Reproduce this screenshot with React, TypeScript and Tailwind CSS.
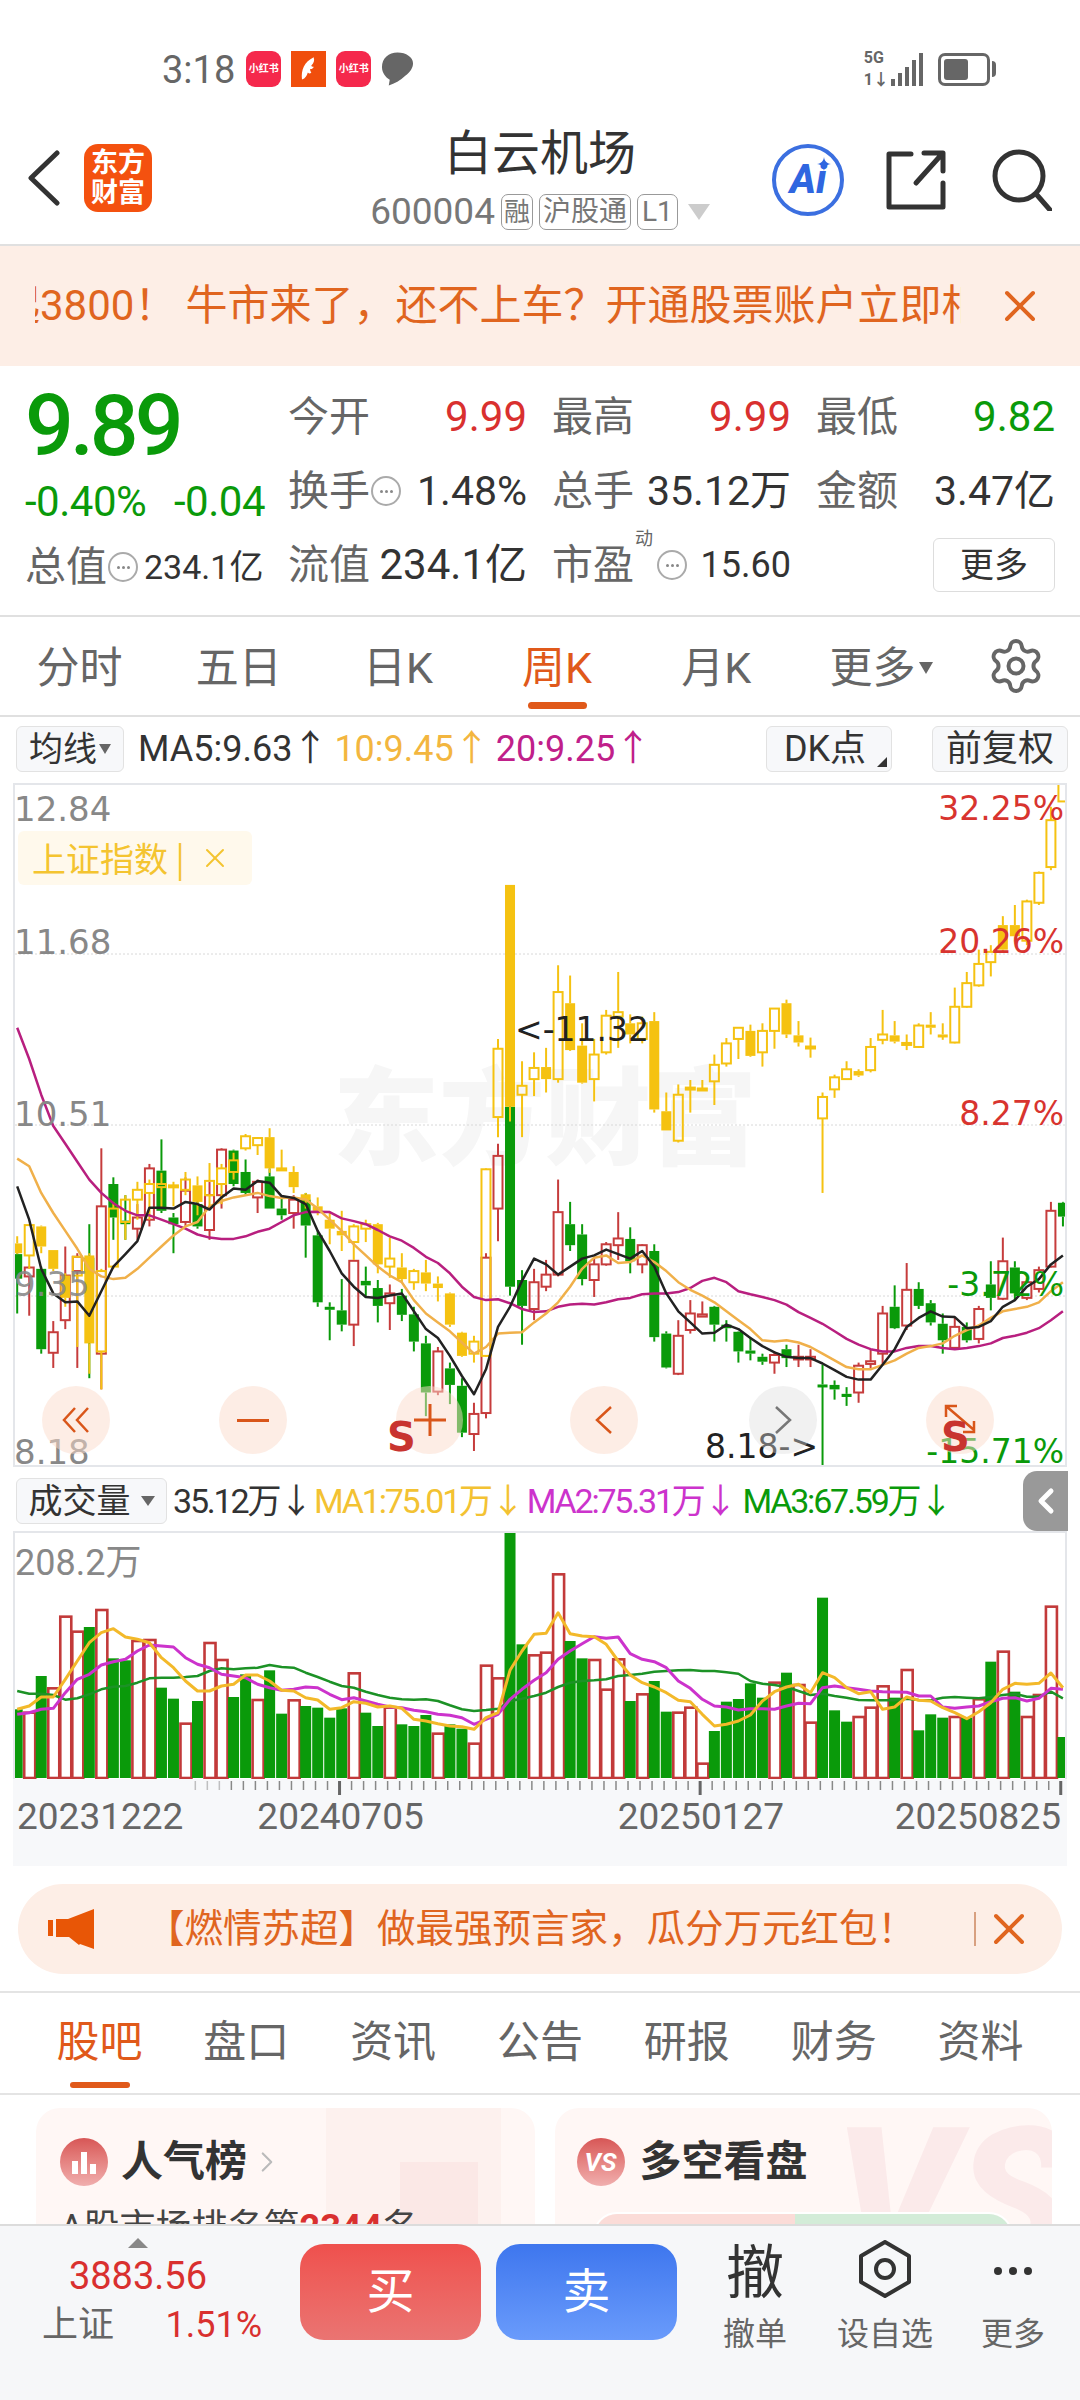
import React from "react";
import { X, ChevronLeft, Settings, ChevronRight } from "lucide-react";

// chart data was read off the screenshot, so y values are in "trace" units
type Candle = [number, number, number, number, string];

const main: Candle[] = [
  [1060,1062,1117,1195,"g"],[1090,1092,1112,1200,"r"],[1090,1095,1275,1285,"g"],[1212,1237,1283,1317,"r"],
  [1045,1110,1210,1230,"r"],[1060,1068,1100,1317,"r"],[995,1070,1100,1340,"g"],[825,955,1285,1365,"r"],
  [890,905,980,1030,"g"],[930,987,995,1030,"g"],[950,980,1005,1030,"r"],[860,870,985,1000,"r"],
  [805,875,965,970,"g"],[970,980,995,1060,"g"],[890,920,990,1000,"r"],[940,950,1000,1005,"g"],
  [900,930,1008,1030,"r"],[825,828,930,960,"r"],[828,830,905,910,"g"],[850,878,925,930,"g"],
  [895,900,935,970,"r"],[870,888,960,960,"g"],[935,960,975,985,"g"],[930,940,970,1005,"r"],
  [925,940,998,1070,"g"],[1010,1020,1170,1180,"g"],[1170,1180,1186,1255,"g"],[1118,1188,1220,1235,"g"],
  [1075,1077,1220,1268,"r"],[1090,1122,1132,1160,"g"],[1120,1138,1178,1215,"g"],[1130,1150,1172,1232,"r"],
  [1140,1155,1198,1212,"g"],[1180,1197,1258,1280,"g"],[1245,1262,1372,1425,"g"],[1270,1280,1370,1378,"r"],
  [1305,1318,1355,1398,"g"],[1340,1357,1462,1472,"g"],[1395,1420,1465,1503,"r"],[1060,1070,1418,1430,"r"],
  [815,842,960,1033,"r"],[730,732,1135,1155,"g"],[1098,1120,1178,1265,"g"],[1095,1125,1185,1210,"r"],
  [1075,1108,1135,1145,"r"],[895,968,1108,1112,"r"],[945,995,1042,1055,"g"],[995,1018,1118,1132,"g"],
  [1070,1085,1120,1158,"r"],[1035,1040,1085,1088,"r"],[968,1027,1042,1075,"r"],[1002,1028,1078,1105,"g"],
  [1040,1042,1085,1105,"r"],[1040,1055,1248,1258,"g"],[1235,1240,1316,1318,"g"],[1210,1245,1330,1333,"r"],
  [1165,1195,1232,1240,"r"],[1168,1197,1202,1202,"r"],[1178,1180,1220,1258,"g"],[1210,1220,1228,1258,"g"],
  [1235,1236,1280,1305,"g"],[1248,1278,1285,1300,"g"],[1285,1292,1303,1310,"g"],[1280,1288,1305,1330,"r"],
  [1265,1275,1295,1315,"g"],[1265,1292,1298,1315,"r"],[1275,1292,1298,1315,"r"],[1310,1354,1358,1540,"g"],
  [1345,1355,1365,1388,"g"],[1360,1375,1382,1402,"g"],[1305,1312,1372,1395,"r"],[1275,1302,1308,1320,"r"],
  [1178,1195,1285,1310,"r"],[1132,1180,1228,1230,"g"],[1082,1142,1222,1232,"r"],[1125,1140,1178,1185,"g"],
  [1165,1172,1215,1222,"g"],[1195,1218,1255,1285,"g"],[1205,1225,1272,1272,"r"],[1215,1225,1255,1260,"g"],
  [1178,1185,1252,1262,"r"],[1078,1130,1160,1188,"g"],[1025,1078,1162,1165,"r"],[1078,1092,1150,1165,"g"],
  [1115,1125,1160,1165,"r"],[1090,1098,1140,1148,"r"],[945,965,1090,1092,"r"],[945,947,978,1000,"g"],
];

const index: Candle[] = [
  [1022,1038,1060,1062,"Y"],[995,997,1065,1095,"y"],[998,1000,1045,1060,"Y"],[1053,1053,1095,1100,"Y"],
  [1105,1110,1160,1180,"Y"],[1068,1068,1110,1270,"y"],[1060,1065,1262,1330,"Y"],[1095,1100,1280,1365,"y"],
  [945,960,1090,1095,"y"],[930,940,990,1030,"y"],[900,918,940,985,"y"],[895,905,925,985,"y"],
  [880,905,912,960,"y"],[900,908,912,955,"y"],[878,895,918,930,"y"],[888,908,945,975,"Y"],
  [858,898,930,960,"y"],[860,870,905,950,"y"],[835,852,878,895,"y"],[793,798,825,830,"y"],
  [800,802,818,840,"y"],[780,800,870,880,"Y"],[828,870,874,874,"y"],[865,878,912,925,"Y"],
  [925,928,942,960,"Y"],[935,955,965,975,"Y"],[970,985,1005,1040,"Y"],[965,1010,1020,1055,"Y"],
  [995,1000,1035,1075,"y"],[985,995,1005,1035,"y"],[992,995,1085,1105,"Y"],[1025,1072,1090,1115,"y"],
  [1060,1092,1118,1125,"Y"],[1095,1100,1125,1142,"y"],[1075,1103,1128,1145,"Y"],[1112,1128,1138,1168,"Y"],
  [1148,1150,1220,1225,"Y"],[1236,1238,1290,1292,"Y"],[1245,1258,1285,1305,"y"],[870,872,1290,1292,"y"],
  [580,602,755,800,"y"],[235,235,732,765,"Y"],[630,685,705,800,"y"],[610,645,670,708,"y"],
  [600,643,670,700,"Y"],[415,475,670,678,"y"],[438,500,605,607,"Y"],[545,595,678,680,"Y"],
  [580,615,670,720,"y"],[515,528,610,615,"y"],[430,520,530,600,"y"],[525,545,570,590,"Y"],
  [530,545,580,590,"y"],[520,540,738,745,"Y"],[700,742,785,785,"Y"],[682,705,808,812,"y"],
  [672,689,691,745,"y"],[672,691,694,695,"y"],[615,638,675,728,"y"],[578,590,635,642,"y"],
  [555,555,580,625,"y"],[548,562,618,620,"Y"],[545,562,610,642,"y"],[512,512,562,602,"y"],
  [492,500,570,578,"Y"],[540,572,588,597,"Y"],[577,597,599,622,"y"],[700,710,758,925,"y"],
  [660,666,693,712,"y"],[630,648,670,672,"y"],[648,652,662,665,"Y"],[578,598,650,655,"y"],
  [515,570,582,592,"y"],[540,572,586,590,"Y"],[570,589,591,605,"y"],[545,550,598,600,"y"],
  [520,548,555,570,"Y"],[545,570,574,582,"Y"],[465,508,588,590,"y"],[430,455,508,510,"y"],
  [380,412,460,463,"y"],[370,385,408,440,"y"],[305,325,380,385,"Y"],[280,325,350,362,"Y"],
  [268,272,360,370,"y"],[205,208,275,280,"y"],[60,90,195,202,"y"],[5,8,48,48,"y"],
];

const ma5 = [910,985,1095,1150,1170,1168,1200,1145,1090,1062,1033,958,958,960,945,950,962,935,915,918,898,902,932,936,950,1010,1055,1105,1135,1158,1160,1155,1150,1190,1230,1250,1290,1335,1376,1320,1225,1180,1122,1072,1085,1108,1090,1072,1065,1052,1062,1072,1055,1090,1150,1190,1215,1240,1238,1220,1230,1250,1268,1282,1292,1295,1295,1307,1322,1337,1343,1343,1310,1275,1225,1205,1190,1202,1203,1228,1225,1212,1180,1165,1135,1118,1085,1065];
const ma10 = [848,865,925,970,1010,1050,1095,1112,1118,1115,1095,1070,1045,1020,1000,990,955,943,935,930,925,932,936,935,940,960,985,1010,1040,1065,1090,1110,1125,1165,1195,1215,1235,1260,1285,1270,1240,1238,1237,1215,1195,1170,1135,1095,1070,1065,1082,1080,1065,1080,1100,1125,1142,1155,1170,1190,1210,1230,1255,1258,1255,1260,1270,1285,1300,1315,1320,1320,1310,1300,1285,1272,1268,1262,1245,1232,1222,1205,1190,1185,1180,1170,1145,1125];
const ma20 = [555,625,705,775,815,855,895,925,948,965,975,975,985,995,1005,1018,1025,1028,1028,1022,1012,1005,990,975,968,967,968,982,988,995,1008,1022,1032,1048,1068,1082,1105,1135,1158,1165,1163,1172,1185,1192,1190,1180,1175,1173,1175,1170,1163,1160,1152,1150,1150,1147,1138,1122,1115,1125,1145,1152,1158,1165,1175,1192,1205,1218,1235,1252,1265,1275,1280,1280,1272,1268,1268,1272,1275,1272,1268,1262,1250,1245,1238,1228,1210,1190];

const vol = [715,725,615,652,437,482,468,417,562,568,510,507,650,683,758,690,516,567,678,610,687,598,728,688,705,710,740,712,607,725,765,710,760,765,732,788,760,773,818,584,622,183,520,553,545,310,510,562,567,656,565,690,670,630,722,725,710,878,780,692,684,637,680,635,605,642,755,380,718,752,738,710,646,680,597,778,730,740,738,740,685,572,542,662,738,672,407,798];
const volKind = main.map((c) => c[4]);
const ma1 = [715,705,678,678,625,570,515,485,473,498,505,515,560,590,630,660,660,645,640,612,612,630,658,660,680,687,715,710,692,697,708,705,712,745,750,758,765,767,775,740,725,598,540,490,487,425,488,495,497,520,570,612,635,648,665,688,692,730,765,760,750,732,690,662,648,640,665,605,620,650,668,662,715,708,678,688,690,710,725,743,722,695,655,637,640,637,606,650];
const ma2 = [730,725,715,712,665,625,610,582,572,565,540,522,525,528,560,580,590,610,615,620,640,650,658,655,648,650,670,686,680,690,700,708,710,718,722,730,733,740,760,745,730,685,655,628,605,565,540,518,497,502,498,548,565,572,590,630,652,685,705,708,717,713,713,715,705,697,698,650,645,650,655,660,662,663,664,675,675,708,712,708,705,692,682,680,690,682,652,655];
const ma3 = [660,668,668,672,686,682,670,655,647,645,635,622,620,620,618,615,600,592,595,592,590,582,588,590,605,618,632,645,650,662,672,680,685,686,685,690,703,715,720,717,713,690,683,675,665,648,635,630,628,625,615,612,608,602,600,598,597,600,600,604,608,630,638,642,648,660,672,668,675,680,687,688,688,688,683,687,688,680,678,680,682,678,672,668,677,677,662,682];

const cx = (i: number) => 17.2 + 12.02 * i;
const ky = (y: number) => 780 + y / 2.24;
const vy = (y: number) => 1470 + y / 3;

const COLORS: Record<string, string> = { r: "#c63c3c", g: "#0a9a0a", y: "#f5c211", Y: "#f5c211" };

function Candles({ data }: { data: Candle[] }) {
  return (
    <>
      {data.map(([hi, top, bot, lo, kind], i) => {
        const x = cx(i);
        const color = COLORS[kind];
        const solid = kind === "g" || kind === "Y";
        return (
          <g key={i} stroke={color} strokeWidth={2}>
            <line x1={x} x2={x} y1={ky(hi)} y2={ky(top)} />
            <line x1={x} x2={x} y1={ky(bot)} y2={ky(lo)} />
            {solid ? (
              <rect x={x - 5} y={ky(top)} width={10} height={Math.max(ky(bot) - ky(top), 3)} fill={color} stroke="none" />
            ) : (
              <rect x={x - 4.5} y={ky(top)} width={9} height={Math.max(ky(bot) - ky(top), 2)} fill="none" />
            )}
          </g>
        );
      })}
    </>
  );
}

function Line({ ys, map, color, w = 2.5 }: { ys: number[]; map: (y: number) => number; color: string; w?: number }) {
  return (
    <polyline
      points={ys.map((y, i) => `${cx(i).toFixed(1)},${map(y).toFixed(1)}`).join(" ")}
      fill="none"
      stroke={color}
      strokeWidth={w}
      strokeLinejoin="round"
    />
  );
}

function InfoDot() {
  return (
    <span className="mx-[1px] flex h-[30px] w-[30px] shrink-0 items-center justify-center gap-[2px] rounded-full border-2 border-[#aaa]">
      <span className="h-[3px] w-[3px] rounded-full bg-[#888]" />
      <span className="h-[3px] w-[3px] rounded-full bg-[#888]" />
      <span className="h-[3px] w-[3px] rounded-full bg-[#888]" />
    </span>
  );
}

function RedBookIcon() {
  return (
    <div className="flex h-[36px] w-[35px] items-center justify-center rounded-[9px] bg-[#f5284c] text-[10px] leading-none font-bold text-white">
      小红书
    </div>
  );
}

function StatusBar() {
  return (
    <div className="flex h-[115px] shrink-0 items-start pt-[50px]">
      <span className="ml-[162px] text-[38px] leading-[40px] text-[#666]">3:18</span>
      <div className="ml-[11px] flex h-[38px] items-center gap-[10px]">
        <RedBookIcon />
        <div className="flex h-[36px] w-[35px] items-center justify-center bg-[#f04e0c]">
          <svg viewBox="0 0 24 24" className="h-[28px] w-[28px]">
            <path d="M16 2C8 6 5 13 6 21c3-1 4-3 5-6 1 1 2 1 3 0-1-1-1-2-1-3 2 0 3-1 3-2-1 0-2 0-2-1 2-2 3-4 2-7z" fill="#fff" />
          </svg>
        </div>
        <RedBookIcon />
        <svg viewBox="0 0 34 36" className="h-[36px] w-[33px]">
          <path d="M17 1C8 1 1 7 1 16c0 6 4 11 8 13l-1 6c6-2 12-5 17-10 5-4 8-8 8-13C33 6 26 1 17 1z" fill="#666" />
        </svg>
      </div>
      <div className="ml-auto mr-[84px] flex items-center">
        <div className="flex h-[38px] flex-col justify-between text-[16px] leading-[16px] font-bold text-[#666]">
          <span>5G</span>
          <span>1↓</span>
        </div>
        <svg viewBox="0 0 34 34" className="ml-[1px] h-[34px] w-[34px]" fill="#666">
          <rect x="1" y="27" width="4" height="7" />
          <rect x="8" y="21" width="4" height="13" />
          <rect x="15" y="15" width="4" height="19" />
          <rect x="22" y="8" width="4" height="26" />
          <rect x="29" y="1" width="4" height="33" />
        </svg>
        <div className="ml-[14px] flex h-[33px] w-[52px] items-center rounded-[7px] border-[3px] border-[#666] p-[3px]">
          <div className="h-full w-[24px] rounded-[3px] bg-[#666]" />
        </div>
        <div className="ml-[2px] h-[16px] w-[4px] rounded-r bg-[#666]" />
      </div>
    </div>
  );
}

function Header() {
  return (
    <div className="flex h-[131px] shrink-0 items-start border-b-2 border-[#e0e0e0]">
      <div className="flex flex-1 items-center pl-[28px] pt-[29px]">
        <svg viewBox="0 0 32 56" className="h-[56px] w-[32px]" fill="none" stroke="#333" strokeWidth="5" strokeLinecap="round" strokeLinejoin="round">
          <path d="M29 3 3 28l26 25" />
        </svg>
        <div className="ml-[24px] flex h-[68px] w-[68px] flex-col items-center justify-center rounded-[14px] bg-[#f4510f] text-[27px] leading-[30px] font-bold text-white">
          <span>东方</span>
          <span>财富</span>
        </div>
      </div>
      <div className="flex flex-col items-center">
        <span className="mt-[12px] text-[48px] leading-[54px] text-[#333]">白云机场</span>
        <div className="mt-[11px] flex items-center">
          <span className="text-[37px] leading-[40px] text-[#777]">600004</span>
          <span className="ml-[6px] rounded-[7px] border border-[#999] px-[2px] text-[26px] leading-[34px] text-[#777]">融</span>
          <span className="ml-[6px] rounded-[7px] border border-[#999] px-[3px] text-[28px] leading-[34px] text-[#777]">沪股通</span>
          <span className="ml-[6px] rounded-[7px] border border-[#999] px-[4px] text-[28px] leading-[34px] text-[#777]">L1</span>
          <svg viewBox="0 0 22 16" className="ml-[10px] h-[16px] w-[22px]">
            <path d="M0 0h22L11 16z" fill="#ccc" />
          </svg>
        </div>
      </div>
      <div className="flex flex-1 items-center justify-end pr-[28px] pt-[29px]">
        <div className="relative flex h-[72px] w-[72px] items-center justify-center rounded-full border-[4px] border-[#3b6fe0] text-[40px] font-extrabold italic leading-none text-[#2f66e0]">
          Ai
          <svg viewBox="0 0 14 14" className="absolute right-[9px] top-[9px] h-[14px] w-[14px]">
            <path d="M7 0c.6 4 2.6 6.400 7 7-4.400.6-6.400 3-7 7-.6-4-2.600-6.400-7-7 4.400-.6 6.400-3 7-7z" fill="#2f66e0" />
          </svg>
        </div>
        <svg viewBox="0 0 60 60" className="ml-[42px] h-[60px] w-[60px]" fill="none" stroke="#333" strokeWidth="5" strokeLinecap="round" strokeLinejoin="round">
          <path d="M25 4H3v53h54V33" />
          <path d="M30 33 56 4M38 3h19v18" />
        </svg>
        <svg viewBox="0 0 60 62" className="ml-[46px] h-[62px] w-[60px]" fill="none" stroke="#333" strokeWidth="5" strokeLinecap="round">
          <circle cx="27" cy="27" r="24" />
          <path d="m45 46 13 15" />
        </svg>
      </div>
    </div>
  );
}

function Banner() {
  return (
    <div className="flex h-[120px] shrink-0 items-center bg-[#fdeee6] text-[#e0651f]">
      <div className="ml-[35px] w-[926px] overflow-hidden whitespace-nowrap text-[42px] leading-[48px]">
        <span className="ml-[-37px] inline-block">起3800！<span className="ml-[9px]">牛市来了，还不上车？开通股票账户立即相约</span></span>
      </div>
      <X className="ml-[33px] h-[52px] w-[52px]" strokeWidth={1.8} />
    </div>
  );
}

function Quote() {
  return (
    <div className="flex h-[251px] shrink-0 border-b-2 border-[#e0e0e0] pl-[25px] pr-[25px] text-[41px] leading-[48px]">
      <div className="w-[263px] shrink-0">
        <div className="mt-[15px] text-[86px] leading-[90px] font-medium tracking-[-4px] text-[#0a9a0a]">9.89</div>
        <div className="mt-[7px] flex w-[240px] justify-between text-[42px] leading-[48px] tracking-[-0.5px] text-[#0a9a0a]">
          <span>-0.40%</span>
          <span>-0.04</span>
        </div>
        <div className="mt-[17px] flex w-[240px] items-center text-[#666]">
          <span>总值</span>
          <InfoDot />
          <span className="ml-[5px] whitespace-nowrap text-[34px] text-[#333]">234.1亿</span>
        </div>
      </div>
      <div className="mt-[27px] grid flex-1 grid-cols-3 grid-rows-[48px_48px_48px] gap-x-[25px] gap-y-[26px] text-[#666]">
        <div className="flex items-center justify-between">
          <span>今开</span>
          <span className="text-[42px] text-[#d9302f]">9.99</span>
        </div>
        <div className="flex items-center justify-between">
          <span>最高</span>
          <span className="text-[42px] text-[#d9302f]">9.99</span>
        </div>
        <div className="flex items-center justify-between">
          <span>最低</span>
          <span className="text-[42px] text-[#0a9a0a]">9.82</span>
        </div>
        <div className="flex items-center justify-between">
          <span className="flex items-center">换手<InfoDot /></span>
          <span className="text-[#333]">1.48%</span>
        </div>
        <div className="flex items-center justify-between">
          <span>总手</span>
          <span className="whitespace-nowrap text-[#333]">35.12万</span>
        </div>
        <div className="flex items-center justify-between">
          <span>金额</span>
          <span className="whitespace-nowrap text-[#333]">3.47亿</span>
        </div>
        <div className="flex items-center justify-between">
          <span>流值</span>
          <span className="whitespace-nowrap text-[42px] text-[#333]">234.1亿</span>
        </div>
        <div className="flex items-center justify-between">
          <span className="relative flex shrink-0 items-center whitespace-nowrap">
            市盈
            <span className="absolute left-[83px] top-[-12px] text-[18px] leading-[20px]">动</span>
            <span className="ml-[22px]"><InfoDot /></span>
          </span>
          <span className="text-[36px] text-[#333]">15.60</span>
        </div>
        <div className="flex items-center justify-end">
          <span className="flex h-[54px] w-[122px] items-center justify-center rounded-[6px] border border-[#ddd] text-[34px] text-[#333]">更多</span>
        </div>
      </div>
    </div>
  );
}

function Periods() {
  return (
    <div className="flex h-[100px] shrink-0 border-b-2 border-[#e0e0e0] text-[43px] text-[#666]">
      <div className="grid flex-1 grid-cols-6 pt-[4px]">
        <span className="flex items-center justify-center">分时</span>
        <span className="flex items-center justify-center">五日</span>
        <span className="flex items-center justify-center">日K</span>
        <span className="relative flex items-center justify-center text-[#e0591a]">
          周K
          <span className="absolute bottom-[6px] left-[50px] h-[7px] w-[59px] rounded-full bg-[#e0591a]" />
        </span>
        <span className="flex items-center justify-center">月K</span>
        <span className="ml-[12px] flex items-center justify-center">
          更多
          <svg viewBox="0 0 14 14" className="ml-[4px] h-[14px] w-[14px]">
            <path d="M0 1h14L7 13z" fill="#666" />
          </svg>
        </span>
      </div>
      <div className="flex w-[125px] items-center justify-center pr-[4px]">
        <Settings className="h-[60px] w-[60px]" strokeWidth={1.6} />
      </div>
    </div>
  );
}

function MaRow() {
  return (
    <div className="flex h-[63px] shrink-0 items-center pl-[16px] pr-[12px] text-[36px] leading-[44px]">
      <span className="flex h-[46px] w-[108px] items-center justify-center rounded-[6px] border border-[#e2e2e2] bg-[#f7f8fa] text-[34px] text-[#333]">
        均线
        <svg viewBox="0 0 12 12" className="ml-[2px] h-[12px] w-[12px]">
          <path d="M0 1h12L6 11z" fill="#666" />
        </svg>
      </span>
      <span className="ml-[14px] text-[#333]">MA5:9.63↑</span>
      <span className="ml-[6px] text-[#f3b63f]">10:9.45↑</span>
      <span className="ml-[6px] text-[#c0208a]">20:9.25↑</span>
      <span className="relative ml-auto flex h-[46px] w-[126px] items-center justify-center rounded-[6px] border border-[#e2e2e2] bg-[#f7f8fa] pr-[8px] text-[#333]">
        DK点
        <svg viewBox="0 0 10 10" className="absolute bottom-[4px] right-[4px] h-[10px] w-[10px]">
          <path d="M10 0v10H0z" fill="#333" />
        </svg>
      </span>
      <span className="ml-[40px] flex h-[46px] w-[136px] items-center justify-center rounded-[6px] border border-[#e2e2e2] bg-[#f7f8fa] text-[#333]">前复权</span>
    </div>
  );
}

function KChart() {
  return (
    <div className="relative mx-[13px] mt-[3px] h-[684px] w-[1054px] shrink-0 overflow-hidden border-2 border-[#e4e6ea] bg-white font-['DejaVu_Sans','Noto_Sans_CJK_SC',sans-serif] text-[34px] leading-[34px]">
      {/* watermark sits under the candles */}
      <div className="absolute left-[318px] top-[268px] font-['Noto_Sans_CJK_SC',sans-serif] text-[106px] leading-[114px] font-black whitespace-nowrap text-[#f6f6f6]">
        东方财富
      </div>
      <svg viewBox="15 785 1050 680" className="absolute left-0 top-0 h-[680px] w-[1050px]">
        {[954, 1125, 1296].map((y) => (
          <line key={y} x1={15} x2={1065} y1={y} y2={y} stroke="#d8d8d8" strokeWidth={1} strokeDasharray="2 2" />
        ))}
        <Candles data={main} />
        <Candles data={index} />
        <Line ys={ma20} map={ky} color="#b81f7f" w={2.5} />
        <Line ys={ma10} map={ky} color="#f0b04a" w={2.5} />
        <Line ys={ma5} map={ky} color="#222" w={2.5} />
      </svg>

      <span className="absolute left-[-1px] top-[7px] text-[#888]">12.84</span>
      <span className="absolute left-[-1px] top-[140px] text-[#888]">11.68</span>
      <span className="absolute left-[-1px] top-[312px] text-[#888]">10.51</span>
      <span className="absolute left-[-1px] top-[482px] text-[#888]/90">9.35</span>
      <span className="absolute left-[-1px] top-[650px] text-[#888]">8.18</span>
      <span className="absolute right-[1px] top-[7px] text-[33px] text-[#d8342f]">32.25%</span>
      <span className="absolute right-[1px] top-[140px] text-[33px] text-[#d8342f]">20.26%</span>
      <span className="absolute right-[1px] top-[312px] text-[33px] text-[#d8342f]">8.27%</span>
      <span className="absolute right-[1px] top-[483px] text-[33px] text-[#0a9a0a]">-3.72%</span>
      <span className="absolute right-[1px] top-[650px] text-[33px] text-[#0a9a0a]">-15.71%</span>
      <span className="absolute left-[500px] top-[228px] text-[33px] text-[#222]">{"<-11.32"}</span>
      <span className="absolute left-[690px] top-[645px] text-[33px] text-[#222]">{"8.18->"}</span>

      <div className="absolute left-[3px] top-[46px] flex h-[54px] w-[234px] items-center rounded-[6px] bg-[#fff9ec] pl-[14px] font-['Noto_Sans_CJK_SC',sans-serif] text-[34px] text-[#f4c430]">
        上证指数 |
        <X className="ml-[14px] h-[32px] w-[32px]" strokeWidth={1.5} />
      </div>

      {/* paging buttons on top of the chart */}
      <div className="absolute inset-x-0 top-[601px] flex justify-between pl-[27px] pr-[71px]">
        <div className="flex h-[68px] w-[68px] items-center justify-center rounded-full bg-[#fbdccb]/50">
          <svg viewBox="0 0 30 30" className="h-[30px] w-[30px]" fill="none" stroke="#d9561a" strokeWidth="2.5"><path d="M14 3 3 15l11 12M27 3 16 15l11 12" /></svg>
        </div>
        <div className="ml-[109px] flex h-[68px] w-[68px] items-center justify-center rounded-full bg-[#fbdccb]/50">
          <div className="h-[3px] w-[32px] bg-[#d9561a]" />
        </div>
        <div className="ml-[109px] flex h-[68px] w-[68px] items-center justify-center rounded-full bg-[#fbdccb]/50">
          <svg viewBox="0 0 32 32" className="h-[32px] w-[32px]" stroke="#d9561a" strokeWidth="3"><path d="M0 16h32M16 0v32" /></svg>
        </div>
        <div className="ml-[107px] flex h-[68px] w-[68px] items-center justify-center rounded-full bg-[#fbdccb]/50">
          <svg viewBox="0 0 20 30" className="h-[30px] w-[20px]" fill="none" stroke="#d9561a" strokeWidth="2.5"><path d="M17 2 3 15l14 13" /></svg>
        </div>
        <div className="ml-[111px] flex h-[68px] w-[68px] items-center justify-center rounded-full bg-[#dcdcdc]/40">
          <svg viewBox="0 0 20 30" className="h-[30px] w-[20px]" fill="none" stroke="#777" strokeWidth="2.5"><path d="m3 2 14 13L3 28" /></svg>
        </div>
        <div className="ml-[109px] flex h-[68px] w-[68px] items-center justify-center rounded-full bg-[#fbdccb]/50">
          <svg viewBox="0 0 34 34" className="h-[34px] w-[34px]" fill="none" stroke="#d9561a" strokeWidth="2.5"><path d="M3 14V3h11M3 3l28 24M31 18v11H20" /></svg>
        </div>
      </div>
      <span className="absolute left-[372px] top-[635px] text-[40px] font-bold text-[#c8342f]">S</span>
      <span className="absolute left-[926px] top-[635px] text-[40px] font-bold text-[#c8342f]">S</span>
    </div>
  );
}

function VolumeHeader() {
  return (
    <div className="mt-[4px] flex h-[60px] shrink-0 items-center whitespace-nowrap pl-[16px] text-[34px] leading-[44px] tracking-[-2.2px]">
      <span className="flex h-[46px] w-[151px] shrink-0 items-center justify-center rounded-[6px] border border-[#e2e2e2] bg-[#f7f8fa] tracking-normal text-[#333]">
        成交量
        <svg viewBox="0 0 14 12" className="ml-[10px] h-[12px] w-[14px]">
          <path d="M0 1h14L7 11z" fill="#666" />
        </svg>
      </span>
      <span className="ml-[6px] text-[#333]">35.12万↓</span>
      <span className="ml-[3px] text-[#f3c232]">MA1:75.01万↓</span>
      <span className="ml-[4px] text-[#cc33cc]">MA2:75.31万↓</span>
      <span className="ml-[7px] text-[#0a9a0a]">MA3:67.59万↓</span>
      <div className="ml-auto mr-[12px] flex h-[60px] w-[45px] shrink-0 items-center justify-center rounded-l-[14px] bg-[#999]">
        <ChevronLeft className="h-[40px] w-[40px] text-white" strokeWidth={3} />
      </div>
    </div>
  );
}

function VolumeChart() {
  return (
    <div className="relative mx-[13px] h-[248px] w-[1054px] shrink-0 overflow-hidden border-x-2 border-t-2 border-[#e4e6ea] bg-white">
      <svg viewBox="15 1532 1050 246" className="absolute left-0 top-0 h-[246px] w-[1050px]">
        {vol.map((top, i) => {
          const x = cx(i);
          const y = vy(top);
          return volKind[i] === "g" ? (
            <rect key={i} x={x - 5.5} y={y} width={11} height={1777 - y} fill="#0a9a0a" />
          ) : (
            <rect key={i} x={x - 5} y={y} width={11} height={1777 - y} fill="#fff" stroke="#c23a3a" strokeWidth={2.6} />
          );
        })}
        <Line ys={ma3} map={vy} color="#1c9226" w={2.5} />
        <Line ys={ma2} map={vy} color="#cc33cc" w={3} />
        <Line ys={ma1} map={vy} color="#f3b92a" w={3} />
      </svg>
      <span className="absolute left-[0px] top-[10px] text-[36px] leading-[40px] text-[#888]">208.2万</span>
    </div>
  );
}

function DateAxis() {
  const major = [27, 57, 87];
  return (
    <div className="relative mx-[13px] h-[87px] w-[1054px] shrink-0 bg-[#f7f8fa] text-[37px] leading-[44px] text-[#666]">
      <svg viewBox="15 1777 1050 16" className="absolute left-0 top-0 h-[16px] w-[1050px]">
        {vol.map((_, i) =>
          i < 15 ? null : (
            <line
              key={i}
              x1={cx(i) - 0.2}
              x2={cx(i) - 0.2}
              y1={1779}
              y2={major.includes(i) ? 1794 : 1788}
              stroke={major.includes(i) ? "#666" : "#888"}
              strokeWidth={major.includes(i) ? 3 : 1.5}
              opacity={i < 18 ? 0.5 : 1}
            />
          ),
        )}
      </svg>
      <div className="flex pl-[4px] pr-[6px] pt-[16px]">
        <span>20231222</span>
        <span className="ml-[74px]">20240705</span>
        <span className="ml-[194px]">20250127</span>
        <span className="ml-auto">20250825</span>
      </div>
    </div>
  );
}

function Notice() {
  return (
    <div className="mx-[18px] mt-[18px] flex h-[90px] shrink-0 items-center rounded-full bg-[#fdeee6] text-[#e0651f]">
      <svg viewBox="0 0 46 40" className="ml-[30px] h-[40px] w-[46px]" fill="#e85606">
        <rect x="0" y="11" width="5" height="16" />
        <path d="M8 10h12L46 0v40l-14-5-1 1-10-8H8z" />
      </svg>
      <span className="ml-[52px] w-[828px] whitespace-nowrap text-[38.5px] leading-[44px]">【燃情苏超】做最强预言家，瓜分万元红包！</span>
      <div className="h-[34px] w-[2px] bg-[#d8a080]" />
      <X className="ml-[7px] h-[52px] w-[52px]" strokeWidth={1.8} />
    </div>
  );
}

function NewsTabs() {
  return (
    <div className="mt-[17px] grid h-[104px] shrink-0 grid-cols-7 border-y-2 border-[#e4e4e4] px-[26px] text-[43px] text-[#666]">
      <span className="relative flex items-center justify-center pb-[1px] text-[#e0591a]">
        股吧
        <span className="absolute bottom-[5px] left-[44px] h-[6px] w-[60px] rounded-full bg-[#e0591a]" />
      </span>
      <span className="flex items-center justify-center pb-[1px]">盘口</span>
      <span className="flex items-center justify-center pb-[1px]">资讯</span>
      <span className="flex items-center justify-center pb-[1px]">公告</span>
      <span className="flex items-center justify-center pb-[1px]">研报</span>
      <span className="flex items-center justify-center pb-[1px]">财务</span>
      <span className="flex items-center justify-center pb-[1px]">资料</span>
    </div>
  );
}

function Cards() {
  return (
    <div className="flex min-h-0 flex-1 gap-[20px] overflow-hidden pl-[36px] pr-[28px] pt-[13px]">
      <div className="relative h-[200px] w-[499px] overflow-hidden rounded-t-[24px] bg-[#fff7f5]">
        <div className="absolute left-[290px] top-[0px] h-[120px] w-[175px] bg-[#fdf1ee]" />
        <div className="absolute left-[364px] top-[54px] h-[100px] w-[78px] bg-[#fbe8e6]" />
        <div className="relative flex items-center pl-[24px] pt-[30px]">
          <div className="flex h-[48px] w-[48px] items-center justify-center rounded-full bg-gradient-to-b from-[#d75656] to-[#f0aeae]">
            <svg viewBox="0 0 26 24" className="h-[24px] w-[26px]" fill="#fff"><rect x="1" y="11" width="6" height="13" /><rect x="10" y="2" width="6" height="22" /><rect x="19" y="14" width="6" height="10" /></svg>
          </div>
          <span className="ml-[13px] text-[42px] leading-[48px] font-bold text-[#333]">人气榜</span>
          <ChevronRight className="ml-[3px] h-[34px] w-[34px] text-[#bbb]" strokeWidth={1.5} />
        </div>
        <div className="relative mt-[22px] pl-[24px] text-[36px] leading-[40px] whitespace-nowrap text-[#444]">
          A股市场排名第<b className="text-[#d9302f]">2344</b>名
        </div>
      </div>
      <div className="relative h-[200px] w-[498px] overflow-hidden rounded-t-[24px] bg-[#fff7f5]">
        <div className="absolute left-[280px] top-[-10px] text-[190px] leading-[200px] font-black italic text-[#fbeaea]">VS</div>
        <div className="relative flex items-center pl-[22px] pt-[30px]">
          <div className="flex h-[48px] w-[48px] items-center justify-center rounded-full bg-gradient-to-b from-[#d75656] to-[#f0aeae] text-[26px] leading-none font-bold italic text-white">
            VS
          </div>
          <span className="ml-[15px] text-[42px] leading-[48px] font-bold text-[#333]">多空看盘</span>
        </div>
        <div className="relative ml-[38px] mt-[26px] flex h-[50px] w-[420px] overflow-hidden rounded-t-[24px] border-2 border-white">
          <div className="w-[200px] bg-[#fbdcd8]" />
          <div className="flex-1 bg-[#d3ecd8]" />
        </div>
      </div>
    </div>
  );
}

function BottomBar() {
  return (
    <div className="flex h-[176px] shrink-0 border-t-2 border-[#dcdcdc] bg-[#f6f7f9]">
      <div className="w-[300px] shrink-0 pl-[42px] pr-[38px]">
        <svg viewBox="0 0 20 10" className="ml-[86px] mt-[12px] h-[10px] w-[20px]">
          <path d="M10 0l10 10H0z" fill="#888" />
        </svg>
        <div className="mt-[6px] pr-[28px] text-center text-[38px] leading-[44px] text-[#d9302f]">3883.56</div>
        <div className="mt-[5px] flex justify-between text-[36px] leading-[44px]">
          <span className="text-[#666]">上证</span>
          <span className="text-[#d9302f]">1.51%</span>
        </div>
      </div>
      <div className="mt-[18px] flex h-[96px] w-[181px] items-center justify-center rounded-[24px] bg-gradient-to-b from-[#ef504d] to-[#ea7472] text-[48px] text-white">买</div>
      <div className="ml-[15px] mt-[18px] flex h-[96px] w-[181px] items-center justify-center rounded-[24px] bg-gradient-to-b from-[#3e76ee] to-[#6a9bfb] text-[48px] text-white">卖</div>
      <div className="ml-[40px] flex w-[76px] flex-col items-center">
        <span className="mt-[12px] text-[58px] leading-[70px] text-[#333]">撤</span>
        <span className="mt-[6px] text-[32px] leading-[40px] text-[#666]">撤单</span>
      </div>
      <div className="ml-[42px] flex w-[100px] flex-col items-center">
        <svg viewBox="0 0 52 58" className="mt-[14px] h-[58px] w-[52px]" fill="none" stroke="#333" strokeWidth="4">
          <path d="M26 2 50 16v26L26 56 2 42V16z" strokeLinejoin="round" />
          <circle cx="26" cy="29" r="9" />
        </svg>
        <span className="mt-[16px] text-[32px] leading-[40px] whitespace-nowrap text-[#666]">设自选</span>
      </div>
      <div className="ml-[40px] flex w-[76px] flex-col items-center">
        <div className="mt-[41px] flex gap-[7px]">
          <span className="h-[8px] w-[8px] rounded-full bg-[#333]" />
          <span className="h-[8px] w-[8px] rounded-full bg-[#333]" />
          <span className="h-[8px] w-[8px] rounded-full bg-[#333]" />
        </div>
        <span className="mt-[39px] text-[32px] leading-[40px] text-[#666]">更多</span>
      </div>
    </div>
  );
}

export default function App() {
  return (
    <div className="flex h-[2400px] w-[1080px] flex-col overflow-hidden bg-white font-['Roboto','Noto_Sans_CJK_SC',sans-serif]">
      <StatusBar />
      <Header />
      <Banner />
      <Quote />
      <Periods />
      <MaRow />
      <KChart />
      <VolumeHeader />
      <VolumeChart />
      <DateAxis />
      <Notice />
      <NewsTabs />
      <Cards />
      <BottomBar />
    </div>
  );
}
